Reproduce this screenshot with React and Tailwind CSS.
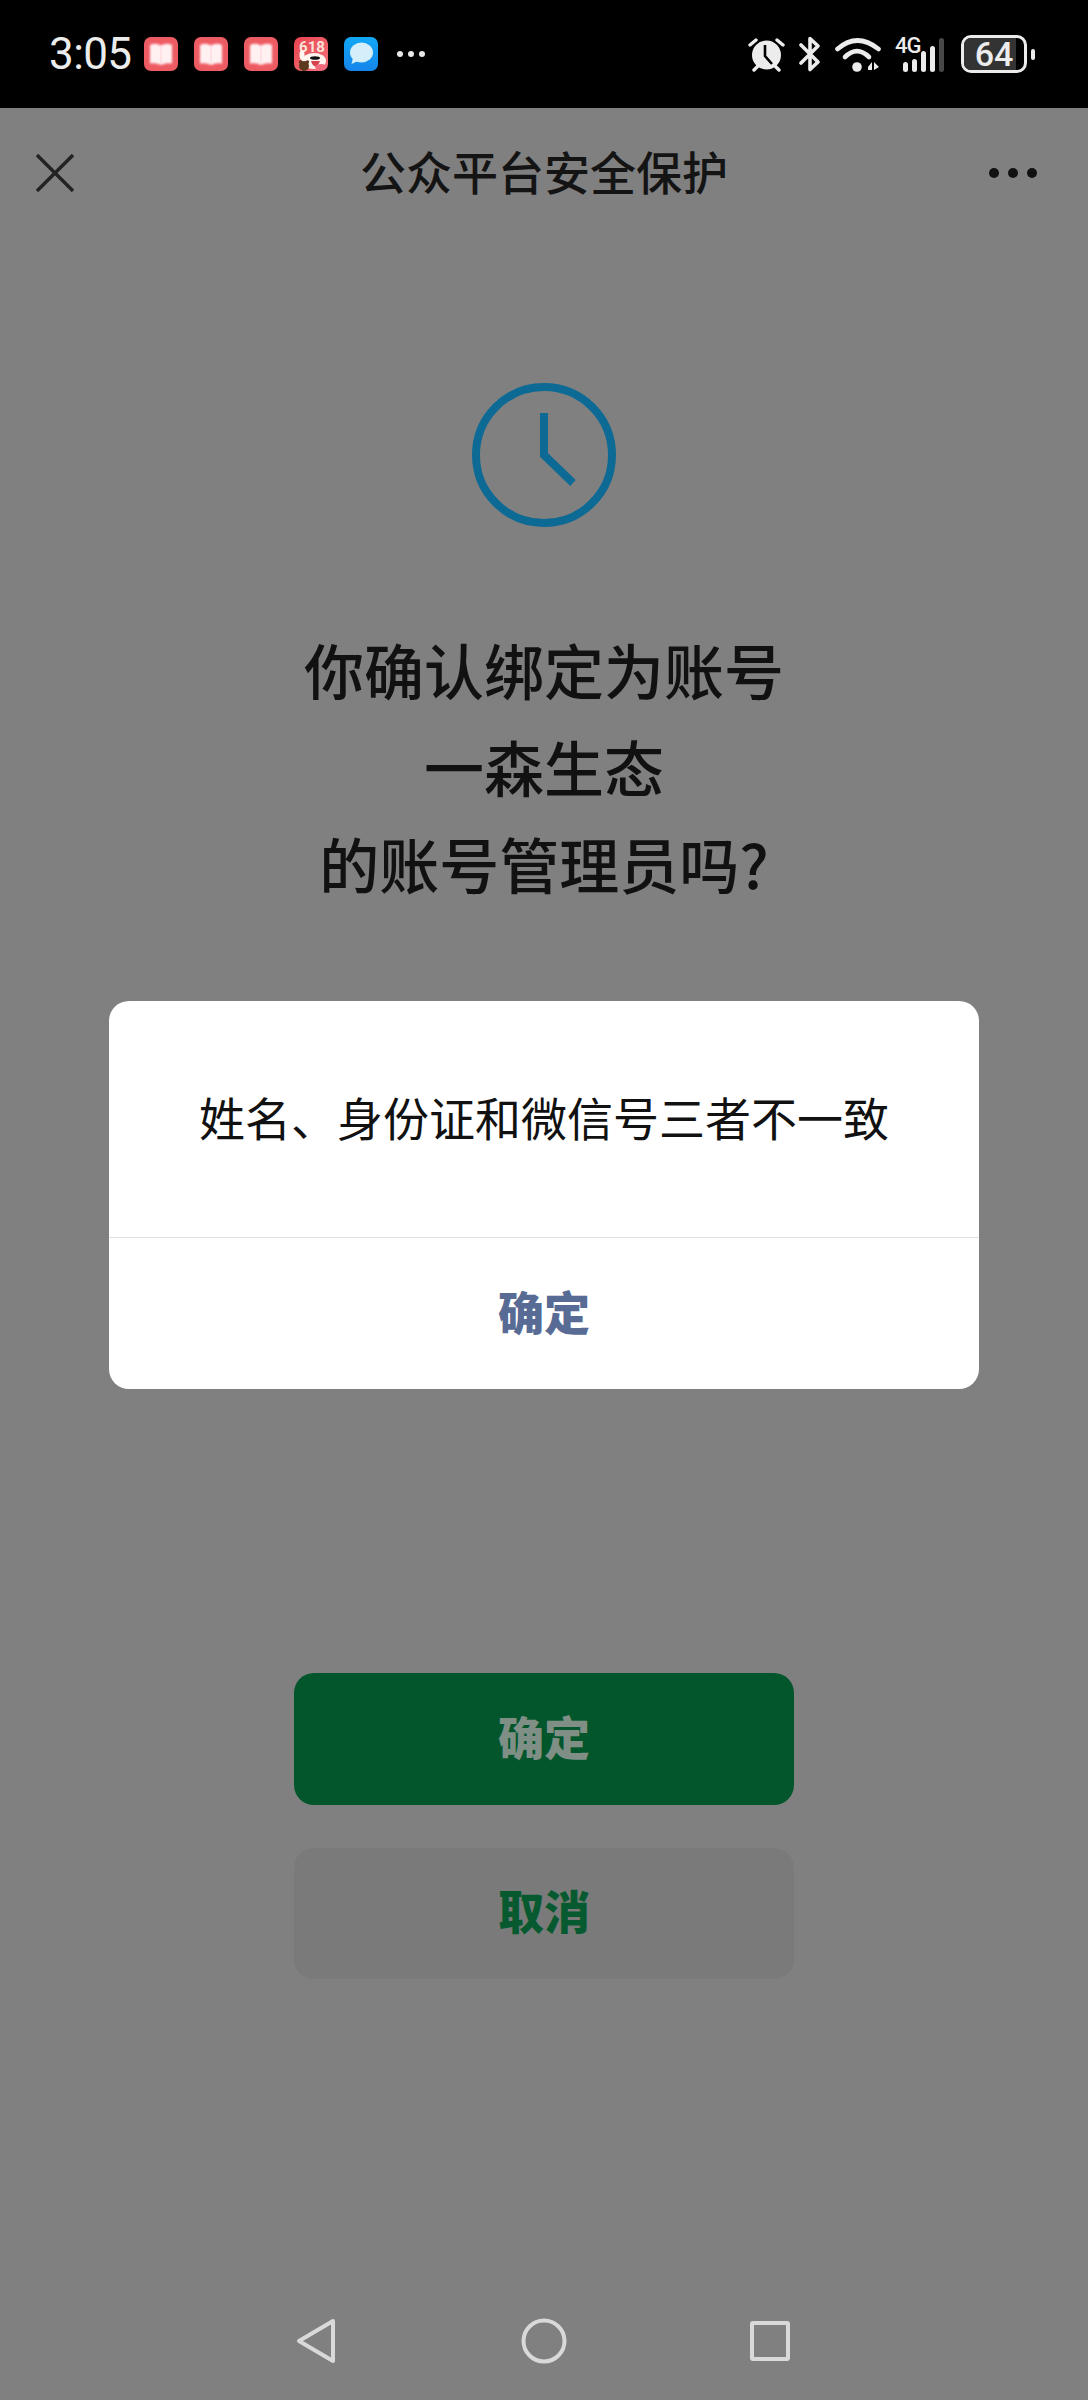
import React from "react";

const cjk = "font-['Noto_Sans_CJK_SC','Noto_Sans',sans-serif]";

const BookIcon = () => (
  <svg viewBox="0 0 34 34" className="w-[34px] h-[34px] shrink-0">
    <defs>
      <filter id="soft" x="-20%" y="-20%" width="140%" height="140%">
        <feGaussianBlur stdDeviation="1" />
      </filter>
    </defs>
    <rect width="34" height="34" rx="7" fill="#ee5c63" />
    <path d="M6 8 Q12 5.5 17 8.5 Q22 5.5 28 8 L28 26.5 Q22 25.5 17 28 Q12 25.5 6 26.5 Z" fill="#fff0f2" filter="url(#soft)" />
    <path d="M17 9 V27" stroke="#fbd5da" strokeWidth="1" />
  </svg>
);

const PromoIcon = () => (
  <svg viewBox="0 0 34 34" className="w-[34px] h-[34px] shrink-0">
    <defs>
      <linearGradient id="promo" x1="0" y1="0" x2="1" y2="1">
        <stop offset="0" stopColor="#e9444e" />
        <stop offset="1" stopColor="#f2727c" />
      </linearGradient>
      <clipPath id="promoClip">
        <rect width="34" height="34" rx="7" />
      </clipPath>
    </defs>
    <g clipPath="url(#promoClip)">
      <rect width="34" height="34" fill="url(#promo)" />
      <text x="18" y="15" textAnchor="middle" fontSize="15" fontWeight="700" fill="#fbe3d8" fontFamily="Roboto, sans-serif">618</text>
      <ellipse cx="20" cy="24" rx="12" ry="8" fill="#fff4f0" />
      <ellipse cx="8" cy="18" rx="2.5" ry="5" fill="#fff4f0" />
      <ellipse cx="21" cy="21" rx="5" ry="1.8" fill="#111" />
      <path d="M17 24 H26 Q24 30 20 29 Q18 28 17 24 Z" fill="#d8424d" />
      <ellipse cx="27" cy="30" rx="6" ry="3" fill="#f06a7c" />
      <circle cx="10" cy="29" r="5" fill="#5c3a1d" />
      <circle cx="6.5" cy="25" r="1.7" fill="#5c3a1d" />
      <circle cx="13.5" cy="25" r="1.7" fill="#5c3a1d" />
    </g>
  </svg>
);

const BubbleIcon = () => (
  <svg viewBox="0 0 34 34" className="w-[34px] h-[34px] shrink-0">
    <defs>
      <linearGradient id="bubble" x1="0" y1="0" x2="0" y2="1">
        <stop offset="0" stopColor="#12a8f5" />
        <stop offset="1" stopColor="#1585ea" />
      </linearGradient>
    </defs>
    <rect width="34" height="34" rx="7" fill="url(#bubble)" />
    <ellipse cx="17.5" cy="15.5" rx="11.5" ry="10" fill="#d5effa" />
    <path d="M9 21 L7.5 27 L14 24 Z" fill="#d5effa" />
  </svg>
);

const StatusBar = () => (
  <div className="h-[108px] shrink-0 bg-black flex items-center justify-between pl-[49px] pr-[53px]">
    <div className="flex items-center">
      <span className="font-['Roboto',sans-serif] text-[44px] leading-none text-[#ececec] tracking-[-0.6px] w-[95px]">3:05</span>
      <div className="flex items-center gap-4">
        <BookIcon />
        <BookIcon />
        <BookIcon />
        <PromoIcon />
        <BubbleIcon />
      </div>
      <div className="flex items-center gap-[5px] ml-[19px]">
        <span className="w-[6px] h-[6px] rounded-full bg-[#e8e8e8]" />
        <span className="w-[6px] h-[6px] rounded-full bg-[#e8e8e8]" />
        <span className="w-[6px] h-[6px] rounded-full bg-[#e8e8e8]" />
      </div>
    </div>
    <div className="flex items-center">
      {/* alarm */}
      <svg viewBox="0 0 37 36" className="w-[37px] h-[36px]">
        <circle cx="18.5" cy="19" r="14.5" fill="#ececec" />
        <path d="M2 9 L8 4 M35 9 L29 4" stroke="#ececec" strokeWidth="3.4" strokeLinecap="round" />
        <path d="M6 34 L10 30 M31 34 L27 30" stroke="#ececec" strokeWidth="3.4" strokeLinecap="round" />
        <path d="M17 9 V20 L24 28" stroke="#000" strokeWidth="2.6" fill="none" />
      </svg>
      {/* bluetooth */}
      <svg viewBox="0 0 22 36" className="w-[22px] h-[36px] ml-[14px]">
        <path d="M2 9 L19 26 L11 33.5 L11 2.5 L19 10 L2 27" fill="none" stroke="#ececec" strokeWidth="3.6" strokeLinecap="round" strokeLinejoin="round" />
      </svg>
      {/* wifi */}
      <svg viewBox="0 0 46 36" className="w-[46px] h-[36px] ml-[14px]">
        <path d="M2.5 13 Q22 -4 43.5 13" fill="none" stroke="#ececec" strokeWidth="4.6" strokeLinecap="round" />
        <path d="M10 21 Q22 9 34 21" fill="none" stroke="#ececec" strokeWidth="4.6" strokeLinecap="round" />
        <circle cx="22" cy="31" r="4.8" fill="#ececec" />
        <path d="M33 31 L37 26 V34 H33 Z M39 26 L44 31 L39 34 Z" fill="#ececec" />
      </svg>
      {/* 4G + bars */}
      <div className="relative w-[52px] h-[36px] ml-[14px] flex items-end gap-[4px] pl-[8px]">
        <span className="absolute left-0 top-0 font-['Roboto',sans-serif] font-medium text-[22px] leading-[19px] text-[#ececec] tracking-[-1px]">4G</span>
        <span className="w-[5px] h-[10px] rounded-full bg-[#ececec]" />
        <span className="w-[5px] h-[13px] rounded-full bg-[#ececec]" />
        <span className="w-[5px] h-[21px] rounded-full bg-[#ececec]" />
        <span className="w-[5px] h-[26px] rounded-full bg-[#ececec]" />
        <span className="w-[5px] h-[34px] rounded-full bg-[#484848]" />
      </div>
      {/* battery */}
      <div className="flex items-center ml-[14px]">
        <div className="relative w-[66px] h-[38px] rounded-[10px] border-[3px] border-[#ececec] overflow-hidden flex items-center justify-center bg-black">
          <span className="absolute left-0 inset-y-0 w-[52px] bg-[#333333]" />
          <span className="relative font-['Roboto',sans-serif] font-medium text-[34px] leading-none text-[#ececec]">64</span>
        </div>
        <span className="w-[4px] h-[11px] rounded-full bg-[#ececec] ml-[4px]" />
      </div>
    </div>
  </div>
);

const Header = () => (
  <div className="h-[130px] shrink-0 grid grid-cols-[1fr_auto_1fr] items-center px-[36px]">
    <svg viewBox="0 0 38 38" className="w-[38px] h-[38px]">
      <path d="M1 1 L37 37 M37 1 L1 37" stroke="#222" strokeWidth="3.4" />
    </svg>
    <span className={`${cjk} text-[46px] leading-none font-medium text-[#141414] pb-[6px]`}>公众平台安全保护</span>
    <div className="flex items-center justify-end gap-[9px] pr-[15px]">
      <span className="w-[10px] h-[10px] rounded-full bg-[#111]" />
      <span className="w-[10px] h-[10px] rounded-full bg-[#111]" />
      <span className="w-[10px] h-[10px] rounded-full bg-[#111]" />
    </div>
  </div>
);

const NavBar = () => (
  <div className="mt-auto h-[118px] shrink-0 flex items-center pl-[296px]">
    <svg viewBox="0 0 40 46" className="w-[40px] h-[46px]">
      <path d="M37 3 L3 23 L37 43 Z" fill="none" stroke="#d9d9d9" strokeWidth="4" strokeLinejoin="round" />
    </svg>
    <svg viewBox="0 0 46 46" className="w-[46px] h-[46px] ml-[185px]">
      <circle cx="23" cy="23" r="20.5" fill="none" stroke="#d9d9d9" strokeWidth="4" />
    </svg>
    <div className="w-[40px] h-[40px] rounded-[3px] border-[4px] border-[#d9d9d9] ml-[183px]" />
  </div>
);

export default function App() {
  return (
    <div className={`relative w-[1088px] h-[2400px] bg-[#808080] flex flex-col ${cjk}`}>
      <StatusBar />
      <Header />

      <svg viewBox="0 0 144 144" className="w-[144px] h-[144px] mx-auto mt-[145px] shrink-0">
        <circle cx="72" cy="72" r="68" fill="none" stroke="#0d6a94" strokeWidth="8" />
        <path d="M72 30 V72 L101 100" fill="none" stroke="#0d6a94" strokeWidth="8" />
      </svg>

      <div className="mt-[93px] text-center text-[60px] leading-[97px] font-medium text-[#111]">
        <div>你确认绑定为账号</div>
        <div>一森生态</div>
        <div>的账号管理员吗?</div>
      </div>

      <div className="mt-[762px] flex flex-col items-center gap-[43px]">
        <div className="w-[500px] h-[132px] pb-[8px] rounded-[20px] bg-[#03562c] flex items-center justify-center text-[46px] font-black text-[#7f8f85]">确定</div>
        <div className="w-[500px] h-[131px] pb-[8px] rounded-[20px] bg-[#7a7a7a] flex items-center justify-center text-[46px] font-black text-[#075a30]">取消</div>
      </div>

      <NavBar />

      {/* dialog sits over the page */}
      <div className="absolute left-[109px] top-[1001px] w-[870px] h-[388px] rounded-[20px] bg-white flex flex-col">
        <div className="h-[236px] pb-[6px] flex items-center justify-center text-[46px] leading-none text-[#111]">姓名、身份证和微信号三者不一致</div>
        <div className="h-px bg-[#e2e2e2]" />
        <div className="flex-1 pb-[6px] flex items-center justify-center text-[46px] font-black text-[#576b95]">确定</div>
      </div>
    </div>
  );
}
